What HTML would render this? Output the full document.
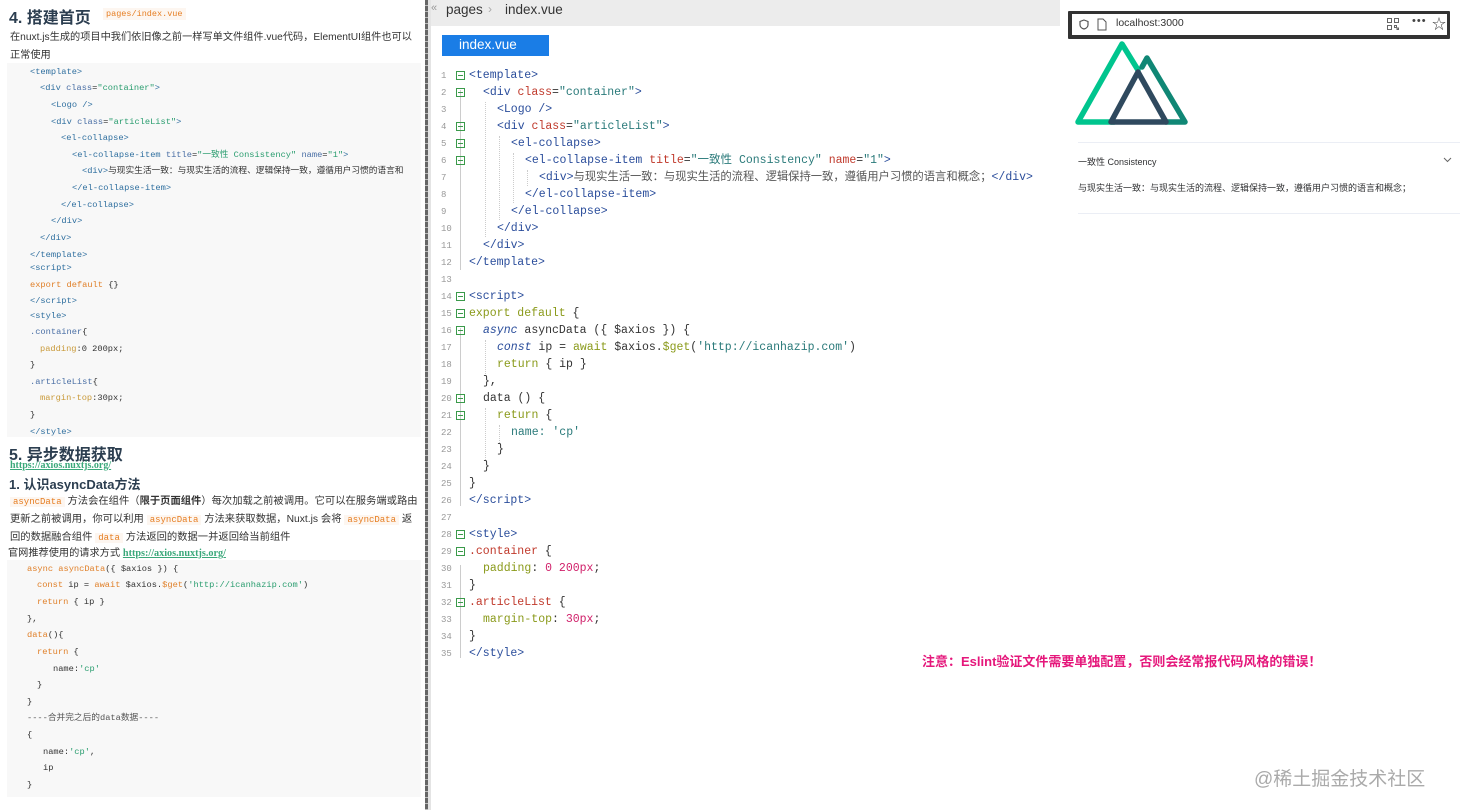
<!DOCTYPE html>
<html><head><meta charset="utf-8">
<style>
*{margin:0;padding:0;box-sizing:border-box}
body{width:1464px;height:810px;background:#fff;position:relative;overflow:hidden;font-family:"Liberation Sans","Noto Sans CJK SC",sans-serif;color:#333}
.a{position:absolute;white-space:nowrap}
.lc{position:absolute;font-family:"Liberation Mono","Noto Sans CJK SC",monospace;font-size:8.7px;line-height:12px;color:#333;white-space:nowrap}
.tg{color:#2f6f9f}.at{color:#4a6fa5}.st{color:#2a9d6f}.kw{color:#e0802a}.pr{color:#c99a3a}.gr{color:#666}
.ed{position:absolute;font-family:"Liberation Mono","Noto Sans CJK SC",monospace;font-size:11.5px;line-height:14px;white-space:nowrap;color:#333}
.ln{position:absolute;left:441px;font-family:"Liberation Mono",monospace;font-size:9px;color:#999}
.fb{position:absolute;left:456px;width:9px;height:9px;border:1px solid #3a9a4a}
.fb:after{content:"";position:absolute;left:1px;top:3px;width:5px;height:1px;background:#3a9a4a}
.t{color:#2a4d9b}.r{color:#c0392b}.s{color:#2a7a7a}.k{color:#8a9a1a}.b{color:#2a4d9b;font-style:italic}.n{color:#d0206a}
.ic{font-family:'Liberation Mono',monospace;font-size:9px;color:#e67e22;background:#fdf6f0;padding:0 3px}
</style></head><body>
<div class="a" style="left:7px;top:63px;width:414px;height:374px;background:#f8f8f8"></div>
<div class="a" style="left:7px;top:560px;width:414px;height:237px;background:#f8f8f8"></div>
<div class="a" style="left:9px;top:4px;font-size:16px;font-weight:bold;color:#2c3e50">4. 搭建首页</div>
<div class="a" style="left:103px;top:8px;font-family:'Liberation Mono',monospace;font-size:8.5px;color:#e67e22;background:#fdf6f0;padding:1px 3px">pages/index.vue</div>
<div class="a" style="left:10px;top:29px;font-size:10.2px;line-height:18px;color:#333">在nuxt.js生成的项目中我们依旧像之前一样写单文件组件.vue代码，ElementUI组件也可以<br>正常使用</div>
<div class="lc" style="left:30px;top:66px"><span class="tg">&lt;template&gt;</span></div>
<div class="lc" style="left:40px;top:82px"><span class="tg">&lt;div</span> <span class="at">class</span>=<span class="st">"container"</span><span class="tg">&gt;</span></div>
<div class="lc" style="left:51px;top:99px"><span class="tg">&lt;Logo /&gt;</span></div>
<div class="lc" style="left:51px;top:116px"><span class="tg">&lt;div</span> <span class="at">class</span>=<span class="st">"articleList"</span><span class="tg">&gt;</span></div>
<div class="lc" style="left:61px;top:132px"><span class="tg">&lt;el-collapse&gt;</span></div>
<div class="lc" style="left:72px;top:149px"><span class="tg">&lt;el-collapse-item</span> <span class="at">title</span>=<span class="st">"一致性 Consistency"</span> <span class="at">name</span>=<span class="st">"1"</span><span class="tg">&gt;</span></div>
<div class="lc" style="left:82px;top:165px"><span class="tg">&lt;div&gt;</span>与现实生活一致：与现实生活的流程、逻辑保持一致，遵循用户习惯的语言和</div>
<div class="lc" style="left:72px;top:182px"><span class="tg">&lt;/el-collapse-item&gt;</span></div>
<div class="lc" style="left:61px;top:199px"><span class="tg">&lt;/el-collapse&gt;</span></div>
<div class="lc" style="left:51px;top:215px"><span class="tg">&lt;/div&gt;</span></div>
<div class="lc" style="left:40px;top:232px"><span class="tg">&lt;/div&gt;</span></div>
<div class="lc" style="left:30px;top:249px"><span class="tg">&lt;/template&gt;</span></div>
<div class="lc" style="left:30px;top:262px"><span class="tg">&lt;script&gt;</span></div>
<div class="lc" style="left:30px;top:279px"><span class="kw">export default</span> {}</div>
<div class="lc" style="left:30px;top:295px"><span class="tg">&lt;/script&gt;</span></div>
<div class="lc" style="left:30px;top:310px"><span class="tg">&lt;style&gt;</span></div>
<div class="lc" style="left:30px;top:326px"><span class="at">.container</span>{</div>
<div class="lc" style="left:40px;top:343px"><span class="pr">padding</span>:0 200px;</div>
<div class="lc" style="left:30px;top:359px">}</div>
<div class="lc" style="left:30px;top:376px"><span class="at">.articleList</span>{</div>
<div class="lc" style="left:40px;top:392px"><span class="pr">margin-top</span>:30px;</div>
<div class="lc" style="left:30px;top:409px">}</div>
<div class="lc" style="left:30px;top:426px"><span class="tg">&lt;/style&gt;</span></div>
<div class="a" style="left:9px;top:441px;font-size:16px;font-weight:bold;color:#2c3e50">5. 异步数据获取</div>
<div class="a" style="left:10px;top:460px;font-size:10px;color:#3aa87a;text-decoration:underline;font-family:'Liberation Serif',serif;font-weight:bold">https://axios.nuxtjs.org/</div>
<div class="a" style="left:9px;top:474px;font-size:13px;font-weight:bold;color:#2c3e50">1. 认识asyncData方法</div>
<div class="a" style="left:10px;top:493px;font-size:10.3px;line-height:18px;color:#333">
<span class="ic">asyncData</span> 方法会在组件（<b>限于页面组件</b>）每次加载之前被调用。它可以在服务端或路由<br>
更新之前被调用，你可以利用 <span class="ic">asyncData</span> 方法来获取数据，Nuxt.js 会将 <span class="ic">asyncData</span> 返<br>
回的数据融合组件 <span class="ic">data</span> 方法返回的数据一并返回给当前组件</div>
<div class="a" style="left:8px;top:544px;font-size:10.2px;color:#333">官网推荐使用的请求方式 <span style="color:#3aa87a;text-decoration:underline;font-family:'Liberation Serif',serif;font-weight:bold">https://axios.nuxtjs.org/</span></div>
<div class="lc" style="left:27px;top:563px"><span class="kw">async asyncData</span>({ $axios }) {</div>
<div class="lc" style="left:37px;top:579px"><span class="kw">const</span> ip = <span class="kw">await</span> $axios.<span class="kw">$get</span>(<span class="st">'http://icanhazip.com'</span>)</div>
<div class="lc" style="left:37px;top:596px"><span class="kw">return</span> { ip }</div>
<div class="lc" style="left:27px;top:613px">},</div>
<div class="lc" style="left:27px;top:629px"><span class="kw">data</span>(){</div>
<div class="lc" style="left:37px;top:646px"><span class="kw">return</span> {</div>
<div class="lc" style="left:53px;top:663px">name:<span class="st">'cp'</span></div>
<div class="lc" style="left:37px;top:679px">}</div>
<div class="lc" style="left:27px;top:696px">}</div>
<div class="lc" style="left:27px;top:712px;color:#555">----合并完之后的data数据----</div>
<div class="lc" style="left:27px;top:729px">{</div>
<div class="lc" style="left:43px;top:746px">name:<span class="st">'cp'</span>,</div>
<div class="lc" style="left:43px;top:762px">ip</div>
<div class="lc" style="left:27px;top:779px">}</div>
<div class="a" style="left:425px;top:0;width:3px;height:810px;background:repeating-linear-gradient(#666 0 5px,#bbb 5px 6px)"></div>
<div class="a" style="left:428px;top:0;width:3px;height:810px;background:#e4e4e4"></div>
<div class="a" style="left:431px;top:0;width:629px;height:26px;background:#ececec"></div>
<div class="a" style="left:431px;top:2px;font-size:11px;color:#999">«</div>
<div class="a" style="left:446px;top:2px;font-size:13.5px;color:#333">pages</div>
<div class="a" style="left:488px;top:2px;font-size:12px;color:#aaa">›</div>
<div class="a" style="left:505px;top:2px;font-size:13.5px;color:#333">index.vue</div>
<div class="a" style="left:442px;top:35px;width:107px;height:21px;background:#1a7de6;color:#fff;font-size:13.5px;padding:2px 0 0 17px">index.vue</div>
<div class="a" style="left:460px;top:90px;width:1px;height:180px;background:#ccc"></div>
<div class="a" style="left:460px;top:328px;width:1px;height:178px;background:#ccc"></div>
<div class="a" style="left:460px;top:565px;width:1px;height:93px;background:#ccc"></div>
<div class="a" style="left:485px;top:102px;width:0;height:135px;border-left:1px dotted #ccc"></div>
<div class="a" style="left:499px;top:136px;width:0;height:84px;border-left:1px dotted #ccc"></div>
<div class="a" style="left:513px;top:153px;width:0;height:50px;border-left:1px dotted #ccc"></div>
<div class="a" style="left:527px;top:170px;width:0;height:16px;border-left:1px dotted #ccc"></div>
<div class="a" style="left:485px;top:340px;width:0;height:34px;border-left:1px dotted #ccc"></div>
<div class="a" style="left:485px;top:408px;width:0;height:52px;border-left:1px dotted #ccc"></div>
<div class="a" style="left:499px;top:425px;width:0;height:18px;border-left:1px dotted #ccc"></div>
<div class="ln" style="top:71px">1</div><div class="fb" style="top:71px"></div><div class="ed" style="left:469px;top:69px"><span class="t">&lt;template&gt;</span></div>
<div class="ln" style="top:88px">2</div><div class="fb" style="top:88px"></div><div class="ed" style="left:483px;top:86px"><span class="t">&lt;div</span> <span class="r">class</span>=<span class="s">"container"</span><span class="t">&gt;</span></div>
<div class="ln" style="top:105px">3</div><div class="ed" style="left:497px;top:103px"><span class="t">&lt;Logo /&gt;</span></div>
<div class="ln" style="top:122px">4</div><div class="fb" style="top:122px"></div><div class="ed" style="left:497px;top:120px"><span class="t">&lt;div</span> <span class="r">class</span>=<span class="s">"articleList"</span><span class="t">&gt;</span></div>
<div class="ln" style="top:139px">5</div><div class="fb" style="top:139px"></div><div class="ed" style="left:511px;top:137px"><span class="t">&lt;el-collapse&gt;</span></div>
<div class="ln" style="top:156px">6</div><div class="fb" style="top:156px"></div><div class="ed" style="left:525px;top:154px"><span class="t">&lt;el-collapse-item</span> <span class="r">title</span>=<span class="s">"一致性 Consistency"</span> <span class="r">name</span>=<span class="s">"1"</span><span class="t">&gt;</span></div>
<div class="ln" style="top:173px">7</div><div class="ed" style="left:539px;top:171px"><span class="t">&lt;div&gt;</span><span style="font-size:11.3px;color:#555">与现实生活一致：与现实生活的流程、逻辑保持一致，遵循用户习惯的语言和概念；</span><span class="t">&lt;/div&gt;</span></div>
<div class="ln" style="top:190px">8</div><div class="ed" style="left:525px;top:188px"><span class="t">&lt;/el-collapse-item&gt;</span></div>
<div class="ln" style="top:207px">9</div><div class="ed" style="left:511px;top:205px"><span class="t">&lt;/el-collapse&gt;</span></div>
<div class="ln" style="top:224px">10</div><div class="ed" style="left:497px;top:222px"><span class="t">&lt;/div&gt;</span></div>
<div class="ln" style="top:241px">11</div><div class="ed" style="left:483px;top:239px"><span class="t">&lt;/div&gt;</span></div>
<div class="ln" style="top:258px">12</div><div class="ed" style="left:469px;top:256px"><span class="t">&lt;/template&gt;</span></div>
<div class="ln" style="top:275px">13</div>
<div class="ln" style="top:292px">14</div><div class="fb" style="top:292px"></div><div class="ed" style="left:469px;top:290px"><span class="t">&lt;script&gt;</span></div>
<div class="ln" style="top:309px">15</div><div class="fb" style="top:309px"></div><div class="ed" style="left:469px;top:307px"><span class="k">export default</span> {</div>
<div class="ln" style="top:326px">16</div><div class="fb" style="top:326px"></div><div class="ed" style="left:483px;top:324px"><span class="b">async</span> asyncData ({ $axios }) {</div>
<div class="ln" style="top:343px">17</div><div class="ed" style="left:497px;top:341px"><span class="b">const</span> ip = <span class="k">await</span> $axios.<span class="k">$get</span>(<span class="s">'http://icanhazip.com'</span>)</div>
<div class="ln" style="top:360px">18</div><div class="ed" style="left:497px;top:358px"><span class="k">return</span> { ip }</div>
<div class="ln" style="top:377px">19</div><div class="ed" style="left:483px;top:375px">},</div>
<div class="ln" style="top:394px">20</div><div class="fb" style="top:394px"></div><div class="ed" style="left:483px;top:392px">data () {</div>
<div class="ln" style="top:411px">21</div><div class="fb" style="top:411px"></div><div class="ed" style="left:497px;top:409px"><span class="k">return</span> {</div>
<div class="ln" style="top:428px">22</div><div class="ed" style="left:511px;top:426px"><span class="s">name: 'cp'</span></div>
<div class="ln" style="top:445px">23</div><div class="ed" style="left:497px;top:443px">}</div>
<div class="ln" style="top:462px">24</div><div class="ed" style="left:483px;top:460px">}</div>
<div class="ln" style="top:479px">25</div><div class="ed" style="left:469px;top:477px">}</div>
<div class="ln" style="top:496px">26</div><div class="ed" style="left:469px;top:494px"><span class="t">&lt;/script&gt;</span></div>
<div class="ln" style="top:513px">27</div>
<div class="ln" style="top:530px">28</div><div class="fb" style="top:530px"></div><div class="ed" style="left:469px;top:528px"><span class="t">&lt;style&gt;</span></div>
<div class="ln" style="top:547px">29</div><div class="fb" style="top:547px"></div><div class="ed" style="left:469px;top:545px"><span class="r">.container</span> {</div>
<div class="ln" style="top:564px">30</div><div class="ed" style="left:483px;top:562px"><span class="k">padding</span>: <span class="n">0 200px</span>;</div>
<div class="ln" style="top:581px">31</div><div class="ed" style="left:469px;top:579px">}</div>
<div class="ln" style="top:598px">32</div><div class="fb" style="top:598px"></div><div class="ed" style="left:469px;top:596px"><span class="r">.articleList</span> {</div>
<div class="ln" style="top:615px">33</div><div class="ed" style="left:483px;top:613px"><span class="k">margin-top</span>: <span class="n">30px</span>;</div>
<div class="ln" style="top:632px">34</div><div class="ed" style="left:469px;top:630px">}</div>
<div class="ln" style="top:649px">35</div><div class="ed" style="left:469px;top:647px"><span class="t">&lt;/style&gt;</span></div>
<div class="a" style="left:1068px;top:11px;width:382px;height:28px;background:#333;border-radius:1px"></div>
<div class="a" style="left:1072px;top:14px;width:375px;height:21px;background:#fff"></div>
<svg class="a" style="left:1079px;top:19px" width="10" height="11" viewBox="0 0 10 11"><path d="M5 1 L9 2.5 V6 C9 8 7 9.5 5 10 C3 9.5 1 8 1 6 V2.5 Z" fill="none" stroke="#555" stroke-width="1.2"/></svg>
<svg class="a" style="left:1097px;top:18px" width="10" height="13" viewBox="0 0 10 13"><path d="M1 1 H6 L9 4 V12 H1 Z" fill="none" stroke="#555" stroke-width="1"/></svg>
<div class="a" style="left:1116px;top:17px;font-size:10.5px;color:#333">localhost:3000</div>
<svg class="a" style="left:1387px;top:18px" width="12" height="12" viewBox="0 0 12 12" fill="none" stroke="#666" stroke-width="1"><rect x="0.5" y="0.5" width="4" height="4"/><rect x="7.5" y="0.5" width="4" height="4"/><rect x="0.5" y="7.5" width="4" height="4"/><rect x="7.5" y="7.5" width="2" height="2"/><rect x="10" y="10" width="1.5" height="1.5"/></svg>
<div class="a" style="left:1412px;top:15px;font-size:11px;color:#444;letter-spacing:1px">•••</div>
<div class="a" style="left:1432px;top:14px;font-size:14px;color:#444">☆</div>
<svg class="a" style="left:1074px;top:40px" width="114" height="88" viewBox="0 0 114 88" fill="none" stroke-linejoin="round" stroke-linecap="round" stroke-width="5.5">
<path d="M64 30 L48 4 L4 82 H40" stroke="#00c58e"/>
<path d="M68 27 L73 18 L111 82 H92" stroke="#108775"/>
<path d="M64 32 L37 82 H92 Z" stroke="#2f495e"/>
</svg>
<div class="a" style="left:1078px;top:142px;width:382px;height:1px;background:#ebeef5"></div>
<div class="a" style="left:1078px;top:155px;font-size:9px;color:#303133">一致性 Consistency</div>
<svg class="a" style="left:1443px;top:157px" width="9" height="6" viewBox="0 0 9 6"><path d="M1 1 L4.5 4.5 L8 1" fill="none" stroke="#666" stroke-width="1"/></svg>
<div class="a" style="left:1078px;top:181px;font-size:9px;color:#303133">与现实生活一致：与现实生活的流程、逻辑保持一致，遵循用户习惯的语言和概念；</div>
<div class="a" style="left:1078px;top:213px;width:382px;height:1px;background:#ebeef5"></div>
<div class="a" style="left:922px;top:651px;font-size:13px;font-weight:bold;color:#e5177b">注意：Eslint验证文件需要单独配置，否则会经常报代码风格的错误！</div>
<div class="a" style="left:1254px;top:764px;font-size:19px;color:#aaa">@稀土掘金技术社区</div>
</body></html>
